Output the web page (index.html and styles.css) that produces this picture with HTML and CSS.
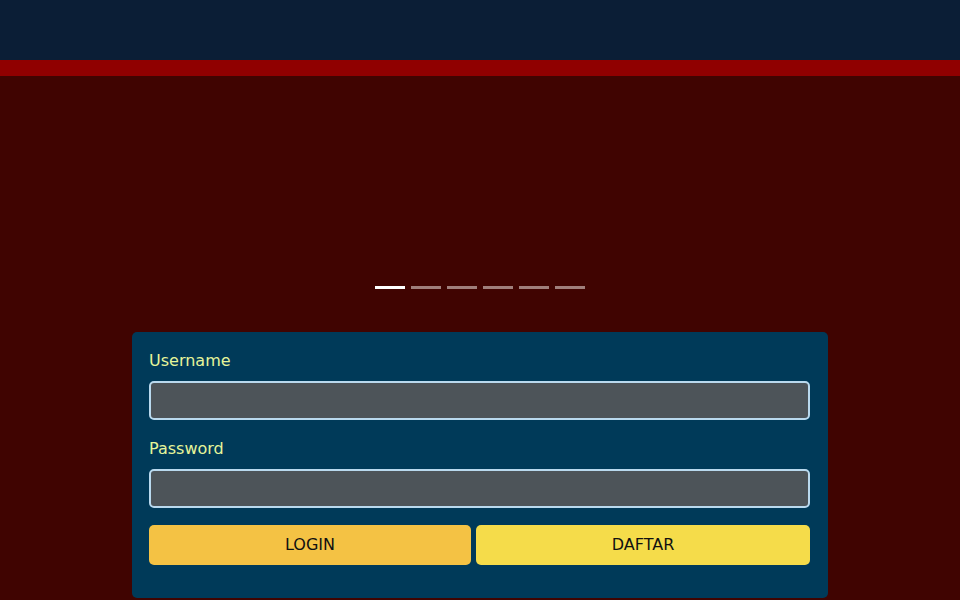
FILE: index.html
```html
<!DOCTYPE html>
<html>
<head>
<meta charset="utf-8">
<link rel="stylesheet" href="styles.css">
</head>
<body>
<header class="topbar"></header>
<div class="redbar"></div>
<section class="slider">
  <div class="dots">
    <span class="dot active"></span>
    <span class="dot"></span>
    <span class="dot"></span>
    <span class="dot"></span>
    <span class="dot"></span>
    <span class="dot"></span>
  </div>
</section>
<form class="card">
  <label class="label">Username</label>
  <input class="field" type="text">
  <label class="label pw">Password</label>
  <input class="field" type="password">
  <div class="actions">
    <button type="button" class="btn login">LOGIN</button>
    <button type="button" class="btn daftar">DAFTAR</button>
  </div>
</form>
</body>
</html>
```
FILE: styles.css
```css
html, body {
  margin: 0;
  padding: 0;
  background: #400401;
  font-family: "DejaVu Sans", sans-serif;
  height: 600px;
  overflow: hidden;
}
.topbar {
  height: 60px;
  background: #0b1e36;
}
.redbar {
  height: 16px;
  background: #900000;
}
.slider {
  height: 213px;
  display: flex;
  align-items: flex-end;
  justify-content: center;
  padding-bottom: 11px;
}
.dots {
  display: flex;
  gap: 6px;
}
.dot {
  width: 30px;
  height: 3px;
  background: #a07f7b;
}
.dot.active {
  background: #ffffff;
}
.card {
  width: 661px;
  margin: 32px auto 0;
  background: #003a59;
  border-radius: 5px;
  padding: 19px 18px 33px 17px;
  display: flex;
  flex-direction: column;
}
.label {
  color: #e6f59a;
  font-size: 16px;
  line-height: 20px;
  margin-bottom: 10px;
}
.label.pw {
  margin-top: 19px;
}
.field {
  box-sizing: border-box;
  height: 39px;
  margin: 0;
  background: #4d5459;
  border: 2px solid #b9d9ee;
  border-radius: 5px;
  outline: none;
}
.actions {
  display: flex;
  gap: 5px;
  margin-top: 17px;
}
.btn {
  height: 40px;
  border: none;
  border-radius: 5px;
  font-family: "DejaVu Sans", sans-serif;
  font-size: 16px;
  color: #111111;
  padding: 0 0 1px 0;
}
.login {
  width: 322px;
  background: #f4c244;
}
.daftar {
  flex: 1;
  background: #f5dc4a;
}
```
